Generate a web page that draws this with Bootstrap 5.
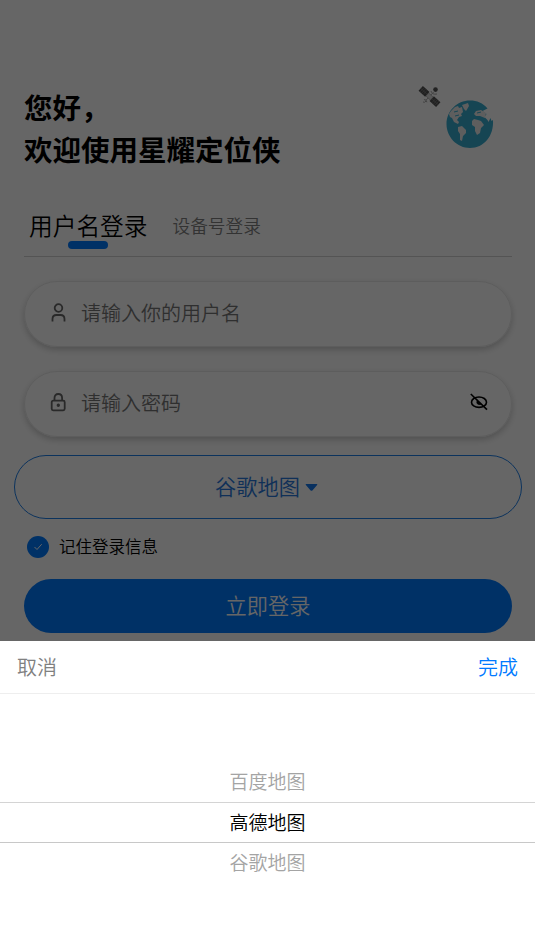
<!DOCTYPE html>
<html lang="zh-CN">
<head>
<meta charset="utf-8">
<meta name="viewport" content="width=device-width, initial-scale=1">
<title>登录</title>
<link href="https://cdn.jsdelivr.net/npm/bootstrap@5.3.0/dist/css/bootstrap.min.css" rel="stylesheet">
<style>
body{font-family:"Noto Sans CJK SC",sans-serif;font-weight:350;color:#000;background:#fff;height:951px;overflow:hidden}
.btn{font-weight:350}
.login-page{height:951px;padding:86px 23px 0 24px}
.hello{font-size:28.5px;line-height:42px;font-weight:700;margin:0}
.globe{width:80px;height:66px;margin:-2px 17px 0 0}
.tabs{height:46px;margin-top:41px;border-bottom:1px solid #d2d2d2;padding-left:5px}
.tab-on{font-size:23.7px;line-height:28px}
.tab-on::after{content:"";display:block;width:40px;height:8px;border-radius:4px;background:#007aff;margin:2px auto 0}
.tab-off{font-size:17.7px;line-height:28px;color:#808080;margin-left:25px}
.field{height:66px;border-radius:33px;border:1px solid #e8e8e8;box-shadow:0 3px 6px rgba(0,0,0,.2);padding:0 22px 1px 23px;margin-top:24px;font-size:20px;color:#777}
.field-first{margin-top:23.5px}
.field span{margin-left:11px;line-height:62px;height:63px}
.map-btn{width:508px;height:64px;border:1px solid #2080e8;border-radius:32px;margin:18.5px -10px 0;color:#2878dc;font-size:21.2px;padding:0 3px 2px 0}
.caret{width:13px;height:9px;margin:3px 0 0 5px}
.remember{height:24px;margin:16px 0 0 3px;font-size:16.5px;line-height:24px}
.remember label{margin-top:-3px}
.tick{width:22px;height:22px;border-radius:50%;background:#007aff;margin-right:10px}
.submit{height:54px;border-radius:27px;background:#007aff;color:#fff;font-size:21.2px;margin-top:20px}
.submit span{display:block;margin-top:-3px}
.shade{z-index:10;background:rgba(0,0,0,.6)}
.sheet{z-index:20;height:310px;background:#fff}
.sheet-head{height:53px;border-bottom:1px solid #eee;padding:0 17px;font-size:20px}
.cancel{color:#808080}.done{color:#007aff}
.picker{padding-top:68px;font-size:19px;text-align:center;line-height:38px;color:#a4a4a4}
.picker div{height:40px}
.picker .chosen{height:41px;line-height:37px;color:#000;border-top:1px solid #d4d4d4;border-bottom:1px solid #c8c8c8}
</style>
<script src="https://cdn.jsdelivr.net/npm/bootstrap@5.3.0/dist/js/bootstrap.bundle.min.js"></script>
</head>
<body>
<main class="login-page">
  <div class="d-flex justify-content-between align-items-start">
    <h1 class="hello">您好，<br>欢迎使用星耀定位侠</h1>
    <svg class="globe" viewBox="415 84 80 66">
      <g transform="translate(429.500 96.500) rotate(43)" fill="#505050">
        <path d="M-12-3.200h9v6.400h-9zM3-3.200h9v6.400H3z"/>
        <path d="M-10-3v6M-8-3v6M-6-3v6M6-3v6M8-3v6M10-3v6M-12 0h9M3 0h9" stroke="#909090" stroke-width=".5"/>
        <path d="M-3-2h6v4h-6z" fill="#ddd" stroke="#999" stroke-width=".6"/>
        <path d="M0-2v-4M0 2v3M-2 6q2-2 4 0" stroke="#999" stroke-width=".8" fill="none"/>
      </g>
      <circle cx="435.500" cy="89.600" r="2.300" fill="#555"/><path d="M431 91q1 4 6 3M426 101q-1 2-3 1" fill="none" stroke="#aaa"/>
      <path d="M487.500 108.500l-5 2.500 4 3-2 3 3 3 1 2 2-4 1 3 1.500-1c1 16-9 28-23 28-13 0-23.500-11-23.500-24s10.500-23.500 23.500-23.500c7 0 13 2.500 17.500 8z" fill="#38acd0"/>
      <g fill="#ececec">
        <path d="M451 111l4-4 3-1 1 2 3-1 1 5-2 2 1 2-3 1-2 3 2 2-1 2-4-2-2-4-2-1-1-3z"/>
        <path d="M462 105l6-2 1 3-3 5-2-2z"/>
        <path d="M458 127l4-1 4 4 0 3-3 3-1 5-2-1v-6l-2-3z"/>
        <path d="M472 121l2-2 4 1 3 1 3 4-3 3-1 5-3 2-2-4v-4l-3-2z"/>
        <path d="M474 114l2-3 5-1 5 3-1 5-5-2-4 0z"/>
      </g>
      <path d="M454 112l4-1M455 116l4-1M477 113l4-1M477 117l4 1" stroke="#38acd0"/>
    </svg>
  </div>
  <div class="tabs d-flex align-items-start">
    <div class="tab-on">用户名登录</div><div class="tab-off">设备号登录</div>
  </div>
  <div class="field field-first d-flex align-items-center">
    <svg width="22" height="22" viewBox="0 0 22 22" fill="none" stroke="#666" stroke-width="1.800"><circle cx="10.500" cy="6" r="3.800"/><path d="M4.500 19.500v-2.500q0-4 4-4h4q4 0 4 4v2.500"/></svg>
    <span>请输入你的用户名</span>
  </div>
  <div class="field d-flex align-items-center">
    <svg width="22" height="22" viewBox="0 0 22 22" fill="none" stroke="#666" stroke-width="1.800"><rect x="3.700" y="8.700" width="13" height="9.600" rx="1.500"/><path d="M6.500 9V6q0-4 3.800-4t3.800 4v3"/><circle cx="10.300" cy="13.200" r=".8" fill="#555"/></svg>
    <span class="me-auto">请输入密码</span>
    <svg width="20" height="20" viewBox="0 0 20 20" fill="none" stroke="#000" stroke-width="1.600"><ellipse cx="10" cy="9.200" rx="7.500" ry="5.200"/><path d="M8.200 7.500q-1.500 4.500 3.500 4z" fill="#000" stroke-width=".8"/><path d="M1.800 1l16.200 15.600"/></svg>
  </div>
  <button class="map-btn btn d-flex align-items-center justify-content-center">谷歌地图<svg class="caret" viewBox="0 0 13 9"><path d="M1.400 1h10.200q1.400 0 .5 1L7.400 7.400q-.9.9-1.800 0L.9 2Q0 1 1.400 1z" fill="#1478ee"/></svg></button>
  <div class="remember d-flex align-items-center"><span class="tick d-flex align-items-center justify-content-center"><svg width="10" height="8" viewBox="0 0 10 8"><path d="M1.500 4l2.500 2.500L8.700 1.200" fill="none" stroke="#fff"/></svg></span><label>记住登录信息</label></div>
  <button class="submit btn w-100 p-0"><span>立即登录</span></button>
</main>
<div class="shade position-fixed top-0 start-0 w-100 h-100"></div>
<section class="sheet position-fixed bottom-0 start-0 w-100">
  <div class="sheet-head d-flex justify-content-between align-items-center"><span class="cancel">取消</span><span class="done">完成</span></div>
  <div class="picker"><div>百度地图</div><div class="chosen">高德地图</div><div>谷歌地图</div></div>
</section>
</body>
</html>
